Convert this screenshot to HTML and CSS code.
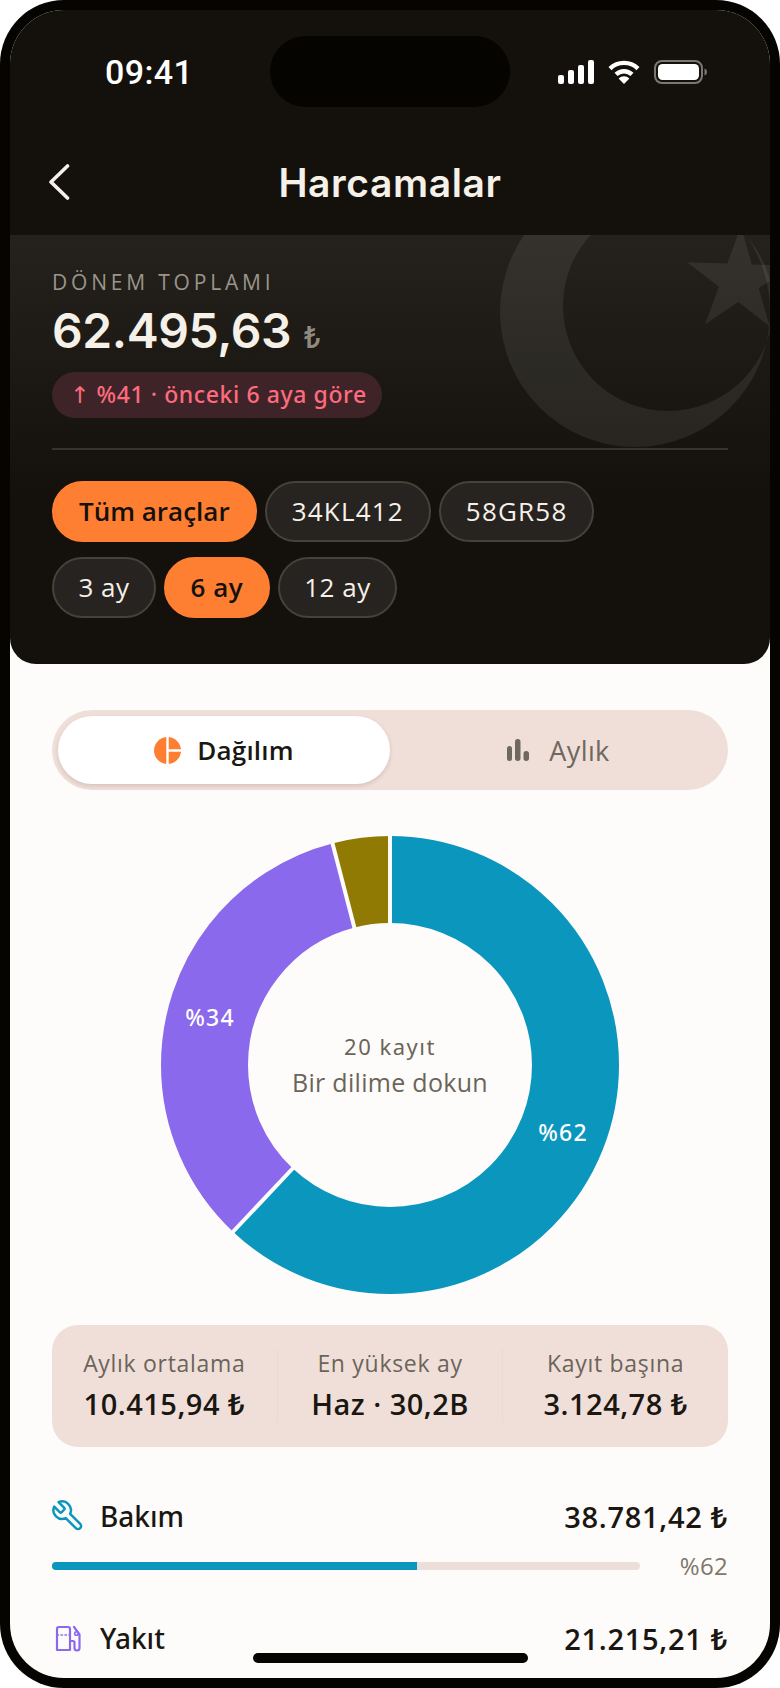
FILE: index.html
```html
<!DOCTYPE html>
<html lang="tr">
<head>
  <meta charset="UTF-8">
  <meta name="viewport" content="width=device-width, initial-scale=1.0">
  <title>Harcamalar</title>
  <link rel="stylesheet" href="styles.css">
</head>
<body>
  <div class="phone">
    <div class="screen">
      <div class="island"></div>

      <header class="topbar">
        <div class="status">
          <span class="time">09:41</span>
          <div class="status-icons">
            <svg width="36" height="24" viewBox="0 0 36 24" fill="#fff">
              <rect x="0" y="15" width="6" height="9" rx="2"/>
              <rect x="10" y="10" width="6" height="14" rx="2"/>
              <rect x="20" y="5" width="6" height="19" rx="2"/>
              <rect x="30" y="0" width="6" height="24" rx="2"/>
            </svg>
            <svg width="32" height="24" viewBox="0 0 32 24" fill="none" stroke="#fff" stroke-width="4.4">
              <path d="M2 8.6a20 20 0 0 1 28 0"/>
              <path d="M8 14.4a11.6 11.6 0 0 1 16 0"/>
              <path d="M16 24l-5.4-5.4a7.6 7.6 0 0 1 10.8 0z" fill="#fff" stroke="none"/>
            </svg>
            <svg width="53" height="24" viewBox="0 0 53 24">
              <rect x="1" y="1" width="47" height="22" rx="7" fill="none" stroke="#7b7771" stroke-width="2"/>
              <rect x="4" y="4" width="41" height="16" rx="4.5" fill="#fff"/>
              <path d="M50.500 8.500c1.500.4 2.500 1.800 2.500 3.500s-1 3.100-2.500 3.500z" fill="#7b7771"/>
            </svg>
          </div>
        </div>
        <div class="nav">
          <svg class="back" width="22" height="36" viewBox="0 0 22 36" fill="none" stroke="#f6f1e8" stroke-width="3.600" stroke-linecap="round" stroke-linejoin="round">
            <path d="M19.500 2 3 18l16.500 16"/>
          </svg>
          <h1 class="title">Harcamalar</h1>
        </div>
      </header>

      <section class="hero">
        <svg class="flag" width="300" height="215" viewBox="470 235 300 215">
          <path fill-rule="evenodd" d="M500 312a135 135 0 1 0 270 0a135 135 0 1 0-270 0zM563 306a105 105 0 1 0 210 0a105 105 0 1 0-210 0z"/>
          <path d="M740.900 226 751.900 264.500 791.900 265.800 758.700 288.200 769.800 326.600 738.300 302 705.100 324.300 718.800 286.800 687.300 262.200 727.300 263.600z"/>
        </svg>
        <div class="summary">
          <div class="summary-label">DÖNEM TOPLAMI</div>
          <div class="summary-total">62.495,63 <span class="summary-cur">₺</span></div>
          <div class="trend"><span class="trend-arrow">↑</span> %41 · önceki 6 aya göre</div>
        </div>
        <div class="chips chips-first">
          <span class="chip chip-on">Tüm araçlar</span>
          <span class="chip">34KL412</span>
          <span class="chip">58GR58</span>
        </div>
        <div class="chips chips-period">
          <span class="chip">3 ay</span>
          <span class="chip chip-on">6 ay</span>
          <span class="chip">12 ay</span>
        </div>
      </section>

      <main class="content">
        <div class="tabs">
          <div class="tab tab-on">
            <svg width="27" height="27" viewBox="0 0 27 27">
              <circle cx="13.500" cy="13.500" r="13.500" fill="#ff7f32"/>
              <path d="M13.500 0v27M13.500 13.500H27" stroke="#fff" stroke-width="2.400"/>
            </svg>
            Dağılım
          </div>
          <div class="tab">
            <svg width="22" height="22" viewBox="0 0 22 22" fill="#6e685e">
              <rect x="0" y="7" width="5" height="15" rx="2.500"/>
              <rect x="8" y="0" width="5.500" height="22" rx="2.700"/>
              <rect x="16.500" y="12" width="5.500" height="10" rx="2.700"/>
            </svg>
            Aylık
          </div>
        </div>

        <div class="donut">
          <svg width="458" height="458" viewBox="0 0 458 458">
            <g fill="none" stroke-width="87" transform="rotate(-90 229 229)">
              <circle cx="229" cy="229" r="185.500" pathLength="100" stroke="#0a96bd" stroke-dasharray="62 38"/>
              <circle cx="229" cy="229" r="185.500" pathLength="100" stroke="#8b69ec" stroke-dasharray="34 66" stroke-dashoffset="-62"/>
              <circle cx="229" cy="229" r="185.500" pathLength="100" stroke="#917a04" stroke-dasharray="4 96" stroke-dashoffset="-96"/>
            </g>
            <g stroke="#fefcfa" stroke-width="4">
              <path d="M229 0v90"/>
              <path d="M68 400l66.500-70.500"/>
              <path d="M170 1.500l24.400 93.900"/>
            </g>
            <text class="donut-pct" x="402" y="305">%62</text>
            <text class="donut-pct" x="49" y="190">%34</text>
          </svg>
          <div class="donut-center">
            <div class="donut-count">20 kayıt</div>
            <div class="donut-hint">Bir dilime dokun</div>
          </div>
        </div>

        <div class="stats">
          <div class="stat">
            <div class="stat-label">Aylık ortalama</div>
            <div class="stat-value">10.415,94 ₺</div>
          </div>
          <div class="stat">
            <div class="stat-label">En yüksek ay</div>
            <div class="stat-value">Haz · 30,2B</div>
          </div>
          <div class="stat">
            <div class="stat-label">Kayıt başına</div>
            <div class="stat-value">3.124,78 ₺</div>
          </div>
        </div>

        <div class="cat">
          <div class="cat-head">
            <svg class="cat-icon" width="32" height="32" viewBox="1 1 22 22" fill="none" stroke="#0a96bd" stroke-width="1.700" stroke-linecap="round" stroke-linejoin="round">
              <path transform="matrix(-1 0 0 1 24 0)" d="M14.700 6.300a1 1 0 0 0 0 1.400l1.600 1.600a1 1 0 0 0 1.400 0l3.770-3.770a6 6 0 0 1-7.940 7.940l-6.910 6.910a2.120 2.120 0 0 1-3-3l6.910-6.910a6 6 0 0 1 7.940-7.940l-3.760 3.760z"/>
            </svg>
            <span class="cat-name">Bakım</span>
            <span class="cat-sum">38.781,42 ₺</span>
          </div>
          <div class="cat-usage">
            <div class="bar"><div class="bar-fill"></div></div>
            <span class="cat-pct">%62</span>
          </div>
        </div>

        <div class="cat cat-next">
          <div class="cat-head">
            <svg class="cat-icon" width="32" height="32" viewBox="0 0 32 32" fill="none" stroke="#8b69ec" stroke-width="2.200" stroke-linecap="round" stroke-linejoin="round">
              <path d="M5 28V7a2 2 0 0 1 2-2h9a2 2 0 0 1 2 2v21z"/>
              <path d="M5 13h13" stroke-dasharray="1.500 2.500" stroke-width="1.400"/>
              <path d="M18 19h3a1.500 1.500 0 0 1 1.500 1.500V26a2.500 2.500 0 0 0 5 0V12.500L22 5"/>
              <circle cx="24.500" cy="11.500" r="1.800" stroke-width="1.600"/>
            </svg>
            <span class="cat-name">Yakıt</span>
            <span class="cat-sum">21.215,21 ₺</span>
          </div>
        </div>
      </main>

      <div class="home-bar"></div>
    </div>
  </div>
</body>
</html>
```

FILE: styles.css
```css
* {
  box-sizing: border-box;
}
body {
  margin: 0;
  background-color: #fff;
  font-family: "Open Sans", "Noto Sans", "Liberation Sans", sans-serif;
  color: #1a1712;
}
.phone {
  width: 780px;
  height: 1688px;
  padding: 10px;
  background-color: #050400;
  border-radius: 64px;
  overflow: hidden;
}
.screen {
  position: relative;
  height: 1668px;
  background-color: #fefcfa;
  border-radius: 54px;
  overflow: hidden;
}
.island {
  position: absolute;
  top: 26px;
  left: 260px;
  width: 240px;
  height: 71px;
  background-color: #050400;
  border-radius: 36px;
}
.topbar {
  background-color: #14110c;
  height: 225px;
}
.status {
  height: 124px;
  padding: 0 63px 0 95px;
  display: flex;
  align-items: center;
  justify-content: space-between;
}
.time {
  font-family: Roboto, sans-serif;
  font-size: 34px;
  font-weight: 500;
  letter-spacing: 0.4px;
  color: #fff;
}
.status-icons {
  display: flex;
  align-items: center;
  gap: 14px;
}
.nav {
  position: relative;
  height: 96px;
  display: flex;
  align-items: center;
  justify-content: center;
}
.back {
  position: absolute;
  left: 38px;
  top: 30px;
}
.title {
  margin: 0;
  font-family: Inter, sans-serif;
  font-size: 39px;
  font-weight: 600;
  letter-spacing: 0.6px;
  color: #f6f1e8;
}
.hero {
  position: relative;
  height: 429px;
  padding: 0 42px;
  background: linear-gradient(#25211c, #14110c 60%);
  border-radius: 0 0 26px 26px;
  overflow: hidden;
}
.flag {
  position: absolute;
  top: 0;
  right: 0;
  fill: rgba(255, 255, 255, 0.075);
}
.summary {
  position: relative;
  height: 215px;
  padding-top: 34px;
  border-bottom: 2px solid #37332c;
}
.summary-label {
  font-size: 21px;
  line-height: 27px;
  letter-spacing: 3.8px;
  color: #9a958a;
}
.summary-total {
  margin-top: 6px;
  font-family: Inter, sans-serif;
  font-size: 48px;
  line-height: 58px;
  font-weight: 600;
  letter-spacing: -0.4px;
  color: #f6f1e8;
}
.summary-cur {
  font-size: 30px;
  font-weight: 500;
  color: #8f8a7f;
}
.trend {
  display: inline-block;
  margin-top: 6px;
  height: 46px;
  padding: 0 15px 0 18px;
  line-height: 44px;
  font-family: "Noto Sans", sans-serif;
  font-size: 23px;
  font-weight: 500;
  letter-spacing: 0.6px;
  color: #ff6b7d;
  background-color: #3e2428;
  border-radius: 23px;
}
.trend-arrow {
  font-family: "DejaVu Sans", sans-serif;
  font-weight: 400;
}
.chips {
  position: relative;
  display: flex;
  gap: 8px;
  margin-top: 15px;
}
.chips-first {
  margin-top: 31px;
}
.chip {
  height: 61px;
  padding: 0 25px;
  line-height: 57px;
  font-size: 26px;
  letter-spacing: 1.2px;
  color: #f6f1e8;
  background-color: #272320;
  border: 2px solid #45413b;
  border-radius: 31px;
}
.chips-period .chip {
  padding: 0 24.500px;
  letter-spacing: 0.5px;
}
.chip-on {
  font-weight: 600;
  letter-spacing: 0;
  color: #14110c;
  background-color: #ff7f32;
  border-color: #ff7f32;
}
.content {
  padding: 46px 42px 0;
}
.tabs {
  display: flex;
  height: 80px;
  padding: 6px;
  background-color: #f0dfd9;
  border-radius: 40px;
}
.tab {
  width: 50%;
  display: flex;
  align-items: center;
  justify-content: center;
  gap: 20px;
  padding-left: 5px;
  font-size: 27px;
  letter-spacing: 0.4px;
  color: #6e685e;
  border-radius: 34px;
}
.tab-on {
  gap: 16px;
  padding-left: 0;
  font-size: 26px;
  letter-spacing: 0.2px;
  font-weight: 600;
  color: #1a1712;
  background-color: #fff;
  box-shadow: 0 2px 4px rgba(90, 60, 50, 0.18);
}
.donut {
  position: relative;
  width: 458px;
  height: 458px;
  margin: 46px auto 0;
}
.donut-pct {
  fill: #fff;
  font-family: "Noto Sans", sans-serif;
  font-size: 23px;
  font-weight: 500;
  letter-spacing: 1.2px;
  text-anchor: middle;
}
.donut-center {
  position: absolute;
  top: 0;
  left: 0;
  width: 100%;
  height: 100%;
  display: flex;
  flex-direction: column;
  justify-content: center;
  align-items: center;
  color: #6b6459;
}
.donut-count {
  font-family: "Noto Sans", sans-serif;
  font-size: 22px;
  letter-spacing: 1.5px;
}
.donut-hint {
  margin-top: 4px;
  font-size: 25px;
  letter-spacing: 0.3px;
}
.stats {
  display: flex;
  height: 122px;
  margin-top: 31px;
  padding: 24px 0;
  background-color: #f0dfd9;
  border-radius: 26px;
}
.stat {
  flex: 1;
  text-align: center;
  border-left: 1px solid rgba(90, 60, 50, 0.04);
}
.stat:first-child {
  border-left: none;
}
.stat-label {
  font-size: 23px;
  line-height: 28px;
  letter-spacing: 0.7px;
  color: #6b6459;
}
.stat-value {
  margin-top: 10px;
  font-size: 29px;
  line-height: 34px;
  font-weight: 600;
  letter-spacing: 0.5px;
}
.cat {
  margin-top: 51px;
}
.cat-next {
  margin-top: 38px;
}
.cat-head {
  display: flex;
  align-items: center;
  height: 36px;
}
.cat-icon {
  flex: none;
  margin-right: 16px;
}
.cat-name {
  flex: 1;
  font-family: "Noto Sans", sans-serif;
  font-size: 28px;
  font-weight: 500;
}
.cat-sum {
  font-size: 29px;
  font-weight: 600;
  letter-spacing: 0.7px;
}
.cat-usage {
  display: flex;
  align-items: center;
  justify-content: space-between;
  margin-top: 15px;
}
.bar {
  width: 588px;
  height: 8px;
  background-color: #ecdfd9;
  border-radius: 4px;
  overflow: hidden;
}
.bar-fill {
  width: 62%;
  height: 100%;
  background-color: #0a96bd;
}
.cat-pct {
  font-size: 24px;
  letter-spacing: 0.3px;
  color: #7e776c;
}
.home-bar {
  position: absolute;
  left: 243px;
  bottom: 15px;
  width: 275px;
  height: 10px;
  background-color: #050400;
  border-radius: 5px;
}
```
